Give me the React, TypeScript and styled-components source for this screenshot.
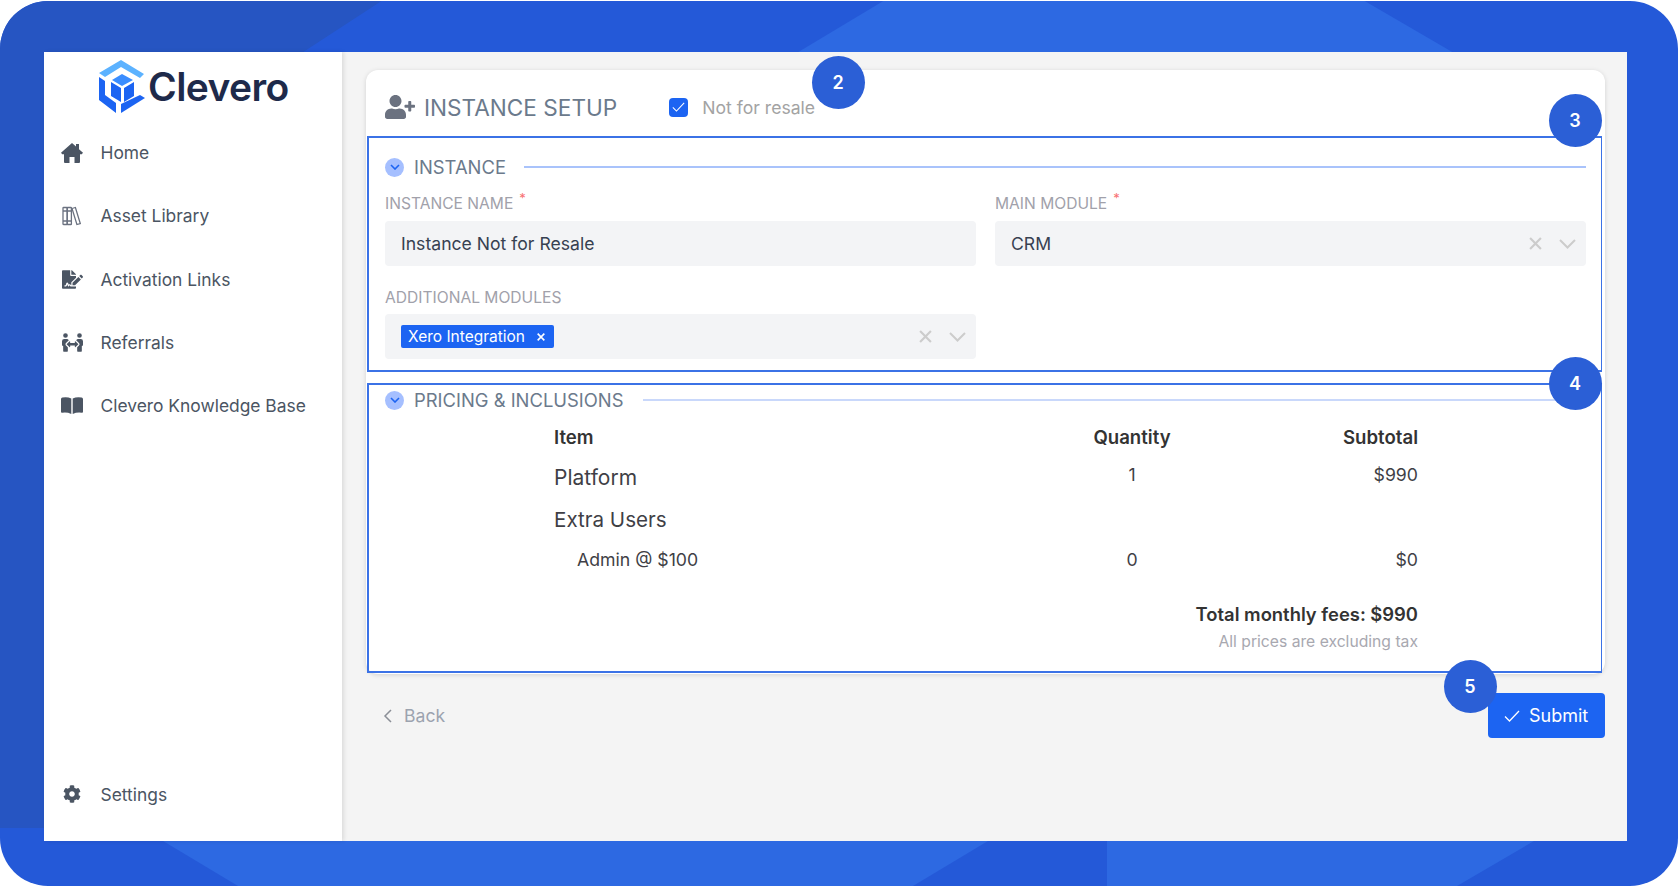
import React from "react";
import styled, { createGlobalStyle } from "styled-components";
import { FaFileSignature, FaPeopleArrows, FaCog, FaUserPlus } from "react-icons/fa";

const Global = createGlobalStyle`
  html, body { margin: 0; padding: 0; background: #fff; }
  body { font-family: Inter, "Liberation Sans", sans-serif; overflow: hidden; }
  * { box-sizing: border-box; }
`;

const Frame = styled.div`
  position: relative;
  width: 1678px;
  height: 885px;
  margin-top: 1px;
  padding: 51px 51px 45px 44px;
  border-radius: 48px;
  overflow: hidden;
  background: #2459d8;
`;
const Backdrop = styled.svg`
  position: absolute;
  left: 0;
  top: -1px;
  width: 1680px;
  height: 886px;
`;
const Panel = styled.div`
  position: relative;
  display: flex;
  height: 789px;
  background: #f4f4f4;
`;
const Sidebar = styled.aside`
  display: flex;
  flex-direction: column;
  flex: 0 0 298px;
  background: #fff;
  box-shadow: 2px 0 4px rgba(0, 0, 0, 0.1);
`;
const Brand = styled.div`
  display: flex;
  align-items: center;
  gap: 2px;
  height: 53px;
  margin: 8px 0 8px 54px;
`;
const BrandName = styled.span`
  font-size: 39px;
  font-weight: 600;
  letter-spacing: -0.6px;
  color: #1e2a4a;
`;
const NavRow = styled.div<{ $bottom?: boolean }>`
  display: flex;
  align-items: center;
  gap: 17.5px;
  height: 63.3px;
  padding-left: 17px;
  font-size: 17.4px;
  color: #4b5563;
  ${(p) => (p.$bottom ? "margin-top: auto; margin-bottom: 15px;" : "")}
`;
const NavIcon = styled.span<{ $size?: number }>`
  display: flex;
  align-items: center;
  justify-content: center;
  width: 22px;
  font-size: ${(p) => p.$size ?? 21}px;
  color: #4b5563;
`;
const Main = styled.main`
  flex: 1;
  padding: 18px 22px 0 24px;
`;
const Card = styled.section`
  height: 604px;
  background: #fff;
  border-radius: 12px;
  box-shadow: 0 1px 5px rgba(0, 0, 0, 0.14);
  padding: 0 3px 0 1px;
`;
const CardHeader = styled.header`
  display: flex;
  align-items: center;
  height: 66px;
  padding: 8px 0 0 18px;
`;
const HeaderIcon = styled.span`
  display: flex;
  font-size: 30px;
  color: #6b7280;
  margin-right: 9px;
`;
const Title = styled.h1`
  margin: 0;
  font-size: 22.6px;
  font-weight: 400;
  color: #6b7a8c;
`;
const Check = styled.span`
  display: flex;
  align-items: center;
  justify-content: center;
  width: 19px;
  height: 19px;
  margin: 0 14px 0 52px;
  border-radius: 4px;
  background: #1c64f2;
`;
const CheckLabel = styled.span`
  font-size: 17.6px;
  color: #a3a3a3;
`;
const Box = styled.div<{ $h: number; $pt: number }>`
  height: ${(p) => p.$h}px;
  padding: ${(p) => p.$pt}px 15px 0 16px;
  border: 2px solid #3b72e6;
  border-right-width: 1px;
  & + & {
    margin-top: 11px;
  }
`;
const SectionHead = styled.div`
  display: flex;
  align-items: center;
  height: 22px;
`;
const Toggle = styled.span`
  display: flex;
  align-items: center;
  justify-content: center;
  width: 19px;
  height: 19px;
  border-radius: 50%;
  background: #a5bfff;
  margin-right: 10px;
`;
const SectionName = styled.h2<{ $gap: number }>`
  margin: 0 ${(p) => p.$gap}px 0 0;
  font-size: 18.4px;
  font-weight: 400;
  color: #6b7a8c;
`;
const Rule = styled.span<{ $soft?: boolean }>`
  flex: 1;
  height: 2px;
  background: ${(p) => (p.$soft ? "#c9d8fb" : "#a9c3fb")};
`;
const Fields = styled.div`
  display: grid;
  grid-template-columns: 591px 591px;
  column-gap: 19px;
  margin-top: 15px;
`;
const Field = styled.div`
  min-height: 94px;
`;
const Label = styled.label<{ $tight?: boolean }>`
  display: block;
  height: 20px;
  margin-top: 1px;
  margin-bottom: ${(p) => (p.$tight ? 6 : 7)}px;
  font-size: 15.6px;
  line-height: 20px;
  color: #a1a1aa;
`;
const Star = styled.sup`
  margin-left: 6px;
  font-size: 13px;
  line-height: 0;
  color: #f87171;
`;
const InputBox = styled.div`
  display: flex;
  align-items: center;
  height: 45px;
  padding: 0 10px 0 16px;
  border-radius: 4px;
  background: #f3f4f6;
  font-size: 17.6px;
  color: #374151;
`;
const Value = styled.span`
  flex: 1;
`;
const Tag = styled.span`
  display: inline-flex;
  align-items: center;
  height: 23px;
  padding: 0 9px 0 7px;
  border-radius: 2px;
  background: #1c64f2;
  font-size: 15.5px;
  color: #fff;
`;
const TagX = styled.span`
  display: flex;
  margin: 0 0 0 12px;
`;
const Tools = styled.span`
  display: flex;
  align-items: center;
  gap: 17px;
`;
const Table = styled.div`
  width: 864px;
  margin: 5px 0 0 169px;
  color: #374151;
`;
const Row = styled.div<{ $h: number }>`
  display: grid;
  grid-template-columns: 504px 148px 212px;
  align-items: center;
  height: ${(p) => p.$h}px;
`;
const Cell = styled.div<{ $bold?: boolean; $size?: number; $indent?: boolean; $raise?: boolean; $align?: string }>`
  font-size: ${(p) => p.$size ?? 17.7}px;
  font-weight: ${(p) => (p.$bold ? 600 : 400)};
  text-align: ${(p) => p.$align ?? "left"};
  padding-left: ${(p) => (p.$indent ? "23px" : "0")};
  padding-bottom: ${(p) => (p.$raise ? "5px" : "0")};
  color: ${(p) => (p.$bold ? "#333" : "#3f3f46")};
`;
const Total = styled.div`
  margin-top: 26px;
  height: 24px;
  line-height: 24px;
  text-align: right;
  font-size: 18.4px;
  font-weight: 600;
  color: #333;
`;
const Note = styled.div`
  margin-top: 5px;
  height: 22px;
  line-height: 22px;
  text-align: right;
  font-size: 15.7px;
  color: #a8a8b0;
`;
const Footer = styled.footer`
  display: flex;
  align-items: center;
  justify-content: space-between;
  height: 45px;
  margin-top: 19px;
`;
const Back = styled.span`
  display: flex;
  align-items: center;
  gap: 12px;
  padding-left: 17px;
  font-size: 17.6px;
  color: #9ca3af;
`;
const Submit = styled.button`
  display: flex;
  align-items: center;
  gap: 9px;
  width: 117px;
  height: 45px;
  padding: 0 0 0 16px;
  border: 0;
  border-radius: 4px;
  background: #1c64f2;
  color: #fff;
  font: 400 18px Inter, "Liberation Sans", sans-serif;
`;
const Badge = styled.span<{ $x: number; $y: number }>`
  position: absolute;
  left: ${(p) => p.$x - 26.5}px;
  top: ${(p) => p.$y - 27.5}px;
  display: flex;
  align-items: center;
  justify-content: center;
  width: 53px;
  height: 53px;
  border-radius: 50%;
  background: #2b5fd6;
  color: #fff;
  font-size: 18px;
  font-weight: 600;
`;

const Chevron = ({ color = "#ccc" }: { color?: string }) => (
  <svg width="17" height="10" viewBox="0 0 17 10" fill="none" stroke={color} strokeWidth="2">
    <path d="M1 1l7.5 7.5L16 1" />
  </svg>
);
const Cross = ({ color = "#ccc", size = 13, w = 2 }: { color?: string; size?: number; w?: number }) => (
  <svg width={size} height={size} viewBox="0 0 12 12" fill="none" stroke={color} strokeWidth={w}>
    <path d="M1 1l10 10M11 1L1 11" />
  </svg>
);
const MiniChevron = () => (
  <svg width="10" height="6" viewBox="0 0 10 6" fill="none" stroke="#1c64f2" strokeWidth="1.6">
    <path d="M1 1l4 4 4-4" />
  </svg>
);
const Tick = ({ w, h }: { w: number; h: number }) => (
  <svg width={w} height={h} viewBox="0 0 16 12" fill="none" stroke="#fff" strokeWidth="1.3">
    <path d="M1 6.5L5.5 11 15 1" />
  </svg>
);
const HomeIcon = () => (
  <svg width="22" height="20" viewBox="0 0 22 20" fill="#4b5563">
    <path d="M11 0l4 3.5V1h3v5.2l4 3.6-1.2 1.4H19V19a1 1 0 0 1-1 1h-4.5v-6h-5v6H4a1 1 0 0 1-1-1v-7.8H1.2L0 9.8z" />
  </svg>
);
const BooksIcon = () => (
  <svg width="20" height="20" viewBox="0 0 20 20" fill="none" stroke="#6b7280" strokeWidth="1.3">
    <rect x="1" y="1.5" width="4.2" height="17" rx=".6" />
    <rect x="5.2" y="1.5" width="4.2" height="17" rx=".6" />
    <path d="M1 5h8.4M1 15h8.4" />
    <path d="M10 2.5l3.4-1 4.9 16-3.4 1z" />
  </svg>
);
const OpenBookIcon = () => (
  <svg width="22" height="17" viewBox="0 0 22 17" fill="#4b5563">
    <path d="M0 2.2Q0 .8 1.4.6 6.5-.3 10.3 1.6V17Q6 15 1.2 15.8 0 16 0 14.8zM22 2.2q0-1.4-1.4-1.6-5.1-.9-8.9 1V17q4.3-2 9.1-1.2 1.2.2 1.2-1z" />
  </svg>
);
const Logo = () => (
  <svg width="48" height="53" viewBox="0 0 48 53">
    <path d="M1 13L23 0l23 14-4 4L23 7 7 17z" fill="#5cb2ff" />
    <path d="M1 17l6 4v14l11 8v10L1 40z" fill="#1c64f2" />
    <path d="M23 53v-9l19-9 5 3z" fill="#1c64f2" />
    <path d="M24 14l11 6-11 6-10-6z" fill="#3a8dff" />
    <path d="M13 22l10 6v14l-10-6zM26 28l10-6v14l-10 6z" fill="#1c64f2" />
  </svg>
);

export default function App() {
  return (
    <>
      <Global />
      <Frame>
        <Backdrop viewBox="0 0 1680 886">
          <polygon points="0,0 383,0 291,60 44,60 44,828 0,828" fill="#2655c2" />
          <polygon points="885,0 1363,0 1466,60 785,60" fill="#2d69e2" />
          <polygon points="163,841 988,841 913,886 238,886" fill="#2d69e2" />
          <polygon points="1107,841 1534,841 1457,886 1107,886" fill="#2d69e2" />
        </Backdrop>
        <Panel>
          <Sidebar>
            <Brand>
              <Logo />
              <BrandName>Clevero</BrandName>
            </Brand>
            <NavRow><NavIcon><HomeIcon /></NavIcon>Home</NavRow>
            <NavRow><NavIcon><BooksIcon /></NavIcon>Asset Library</NavRow>
            <NavRow><NavIcon><FaFileSignature /></NavIcon>Activation Links</NavRow>
            <NavRow><NavIcon><FaPeopleArrows /></NavIcon>Referrals</NavRow>
            <NavRow><NavIcon><OpenBookIcon /></NavIcon>Clevero Knowledge Base</NavRow>
            <NavRow $bottom><NavIcon $size={18}><FaCog /></NavIcon>Settings</NavRow>
          </Sidebar>
          <Main>
            <Card>
              <CardHeader>
                <HeaderIcon><FaUserPlus /></HeaderIcon>
                <Title>INSTANCE SETUP</Title>
                <Check><Tick w={13} h={10} /></Check>
                <CheckLabel>Not for resale</CheckLabel>
              </CardHeader>
              <Box $h={236} $pt={18}>
                <SectionHead>
                  <Toggle><MiniChevron /></Toggle>
                  <SectionName $gap={18}>INSTANCE</SectionName>
                  <Rule />
                </SectionHead>
                <Fields>
                  <Field>
                    <Label>INSTANCE NAME<Star>*</Star></Label>
                    <InputBox><Value>Instance Not for Resale</Value></InputBox>
                  </Field>
                  <Field>
                    <Label>MAIN MODULE<Star>*</Star></Label>
                    <InputBox>
                      <Value>CRM</Value>
                      <Tools><Cross /><Chevron /></Tools>
                    </InputBox>
                  </Field>
                  <Field>
                    <Label $tight>ADDITIONAL MODULES</Label>
                    <InputBox>
                      <Value><Tag>Xero Integration<TagX><Cross color="#fff" size={8} w={2.4} /></TagX></Tag></Value>
                      <Tools><Cross /><Chevron /></Tools>
                    </InputBox>
                  </Field>
                </Fields>
              </Box>
              <Box $h={290} $pt={4}>
                <SectionHead>
                  <Toggle><MiniChevron /></Toggle>
                  <SectionName $gap={20}>PRICING &amp; INCLUSIONS</SectionName>
                  <Rule $soft />
                </SectionHead>
                <Table>
                  <Row $h={41}>
                    <Cell $bold $size={18.6}>Item</Cell>
                    <Cell $bold $size={18.6} $align="center">Quantity</Cell>
                    <Cell $bold $size={18.6} $align="right">Subtotal</Cell>
                  </Row>
                  <Row $h={40}>
                    <Cell $size={21}>Platform</Cell>
                    <Cell $raise $align="center">1</Cell>
                    <Cell $raise $align="right">$990</Cell>
                  </Row>
                  <Row $h={45}>
                    <Cell $size={20.6}>Extra Users</Cell>
                  </Row>
                  <Row $h={34}>
                    <Cell $indent>Admin @ $100</Cell>
                    <Cell $align="center">0</Cell>
                    <Cell $align="right">$0</Cell>
                  </Row>
                  <Total>Total monthly fees: $990</Total>
                  <Note>All prices are excluding tax</Note>
                </Table>
              </Box>
            </Card>
            <Footer>
              <Back>
                <svg width="9" height="14" viewBox="0 0 9 14" fill="none" stroke="#8b8f97" strokeWidth="1.5">
                  <path d="M8 1L2 7l6 6" />
                </svg>
                Back
              </Back>
              <Submit><Tick w={16} h={12} />Submit</Submit>
            </Footer>
          </Main>
        </Panel>
        <Badge $x={838} $y={82}>2</Badge>
        <Badge $x={1575} $y={120}>3</Badge>
        <Badge $x={1575} $y={383}>4</Badge>
        <Badge $x={1470} $y={686}>5</Badge>
      </Frame>
    </>
  );
}
